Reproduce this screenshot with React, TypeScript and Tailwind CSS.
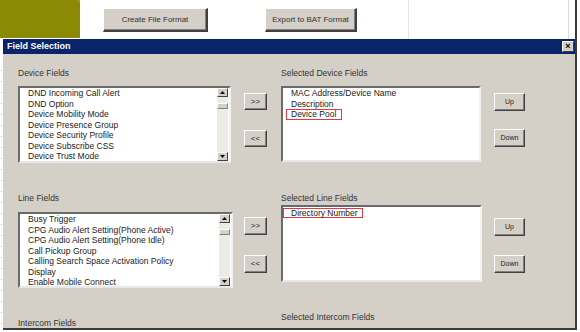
import React from "react";

const btn3d =
  "flex items-center justify-center bg-[#d4d0c8] border border-t-white border-l-white border-r-[#404040] border-b-[#404040] shadow-[inset_-1px_-1px_0_#808080] text-[#222]";

function Btn({ label, w, h, mt, cls = "" }: { label: string; w: number; h: number; mt: number; cls?: string }) {
  return (
    <div className={`${btn3d} ${cls}`} style={{ width: w, height: h, marginTop: mt }}>
      {label}
    </div>
  );
}

function Arrow({ up }: { up: boolean }) {
  return (
    <div className="h-[9px] w-full bg-[#d4d0c8] border border-t-white border-l-white border-r-[#404040] border-b-[#404040] flex items-center justify-center">
      <svg width="5" height="3" viewBox="0 0 5 3">
        {up ? <polygon points="2.5,0 5,3 0,3" fill="#000" /> : <polygon points="0,0 5,0 2.5,3" fill="#000" />}
      </svg>
    </div>
  );
}

function ScrollBar() {
  return (
    <div className="w-[11px] h-full flex flex-col bg-[#ecebe6] mr-[1px]">
      <Arrow up />
      <div className="flex-1 flex flex-col">
        <div className="mt-[6px] h-[6px] bg-[#d4d0c8] border border-t-white border-l-white border-r-[#808080] border-b-[#808080]" />
      </div>
      <Arrow up={false} />
    </div>
  );
}

function ListBox({
  w,
  h,
  mt,
  children,
  scroll,
}: {
  w: number;
  h: number;
  mt: number;
  children: React.ReactNode;
  scroll?: boolean;
}) {
  return (
    <div
      className="bg-white border-2 border-t-[#6a6a6a] border-l-[#6a6a6a] border-r-[#f2f2f2] border-b-[#e8e8e8] flex overflow-hidden"
      style={{ width: w, height: h, marginTop: mt }}
    >
      <div className="flex-1 overflow-hidden pl-[8px] text-[8.5px] leading-[10.5px] text-[#1a1a1a] whitespace-nowrap">
        {children}
      </div>
      {scroll && <ScrollBar />}
    </div>
  );
}

export default function App() {
  const deviceFields = [
    "DND Incoming Call Alert",
    "DND Option",
    "Device Mobility Mode",
    "Device Presence Group",
    "Device Security Profile",
    "Device Subscribe CSS",
    "Device Trust Mode",
  ];
  const lineFields = [
    "Busy Trigger",
    "CPG Audio Alert Setting(Phone Active)",
    "CPG Audio Alert Setting(Phone Idle)",
    "Call Pickup Group",
    "Calling Search Space Activation Policy",
    "Display",
    "Enable Mobile Connect",
  ];
  return (
    <div className="w-[580px] h-[332px] bg-white relative overflow-hidden flex flex-col font-['Liberation_Sans',Arial,sans-serif]">
      {/* spreadsheet grid lines behind */}
      <div className="absolute left-[408px] top-0 w-px h-[39px] bg-[#e4e4e4]" />
      <div className="absolute left-[568px] top-0 w-px h-[39px] bg-[#dcdcdc]" />
      <div className="absolute left-[575px] top-0 w-[2px] h-[39px] bg-[#3a3a3a]" />
      <div className="absolute left-0 top-[60px] w-[3px] h-[270px] bg-[repeating-linear-gradient(to_bottom,#fff_0px,#fff_10px,#e6e6e6_10px,#e6e6e6_11px)]" />

      {/* top strip */}
      <div className="h-[39px] flex shrink-0">
        <div className="w-[80px] h-[38px] bg-[#8c8904] relative">
          <div className="absolute right-0 top-0 w-[3px] h-[2px] bg-[#d07a20]" />
        </div>
        <Btn label="Create File Format" w={105} h={24} mt={8} cls="ml-[23px] text-[8px] text-[#333] border-r-2 border-b-2" />
        <Btn label="Export to BAT Format" w={92} h={24} mt={8} cls="ml-[57px] text-[8px] text-[#333] border-r-2 border-b-2" />
      </div>

      {/* dialog */}
      <div className="ml-[3px] w-[574px] h-[291px] shrink-0 flex flex-col bg-[#d4d0c8] border-r-2 border-b-2 border-[#3c3c3c]">
        <div className="h-[15px] shrink-0 bg-[#0a246a] flex items-center justify-between pl-[4px] pr-[1px]">
          <span className="text-white font-bold text-[9px] leading-none">Field Selection</span>
          <div className="w-[12px] h-[11px] bg-[#d4d0c8] border border-t-white border-l-white border-r-[#404040] border-b-[#404040] flex items-center justify-center text-[9px] font-bold leading-none text-black">
            ×
          </div>
        </div>

        <div className="flex-1 flex flex-col pl-[15px] pt-[14px] overflow-hidden text-[8.5px] text-[#333]">
          {/* section 1 */}
          <div className="h-[125px] shrink-0 flex">
            <div className="w-[213px] flex flex-col">
              <div className="h-[10px] leading-[10px]">Device Fields</div>
              <ListBox w={213} h={77} mt={8} scroll>
                {deviceFields.map((f) => (
                  <div key={f}>{f}</div>
                ))}
              </ListBox>
            </div>
            <div className="ml-[13px] w-[23px] flex flex-col">
              <Btn label=">>" w={23} h={17} mt={25} cls="text-[8px]" />
              <Btn label="<<" w={23} h={17} mt={20} cls="text-[8px]" />
            </div>
            <div className="ml-[14px] w-[200px] flex flex-col">
              <div className="h-[10px] leading-[10px]">Selected Device Fields</div>
              <ListBox w={200} h={76} mt={8}>
                <div>MAC Address/Device Name</div>
                <div>Description</div>
                <div>
                  <span className="inline-block border border-[#e0393e] -ml-[5px] pl-[4px] pr-[5px] leading-[9px]">Device Pool</span>
                </div>
              </ListBox>
            </div>
            <div className="ml-[13px] w-[31px] flex flex-col">
              <Btn label="Up" w={31} h={18} mt={25} cls="text-[7px]" />
              <Btn label="Down" w={31} h={18} mt={18} cls="text-[7px]" />
            </div>
          </div>

          {/* section 2 */}
          <div className="h-[119px] shrink-0 flex">
            <div className="w-[213px] flex flex-col">
              <div className="h-[10px] leading-[10px]">Line Fields</div>
              <ListBox w={215} h={76} mt={9} scroll>
                {lineFields.map((f) => (
                  <div key={f}>{f}</div>
                ))}
              </ListBox>
            </div>
            <div className="ml-[13px] w-[23px] flex flex-col">
              <Btn label=">>" w={23} h={18} mt={24} cls="text-[8px]" />
              <Btn label="<<" w={23} h={18} mt={20} cls="text-[8px]" />
            </div>
            <div className="ml-[14px] w-[201px] flex flex-col">
              <div className="h-[10px] leading-[10px]">Selected Line Fields</div>
              <ListBox w={201} h={77} mt={2}>
                <div className="pt-[1px]">
                  <span className="inline-block border border-[#e0393e] -ml-[8px] pl-[7px] pr-[4px] leading-[8px]">Directory Number</span>
                </div>
              </ListBox>
            </div>
            <div className="ml-[12px] w-[31px] flex flex-col">
              <Btn label="Up" w={31} h={18} mt={25} cls="text-[7px]" />
              <Btn label="Down" w={31} h={18} mt={19} cls="text-[7px]" />
            </div>
          </div>

          {/* section 3 */}
          <div className="flex">
            <div className="w-[263px] mt-[6px] leading-[10px]">Intercom Fields</div>
            <div className="leading-[10px]">Selected Intercom Fields</div>
          </div>
        </div>
      </div>
    </div>
  );
}
